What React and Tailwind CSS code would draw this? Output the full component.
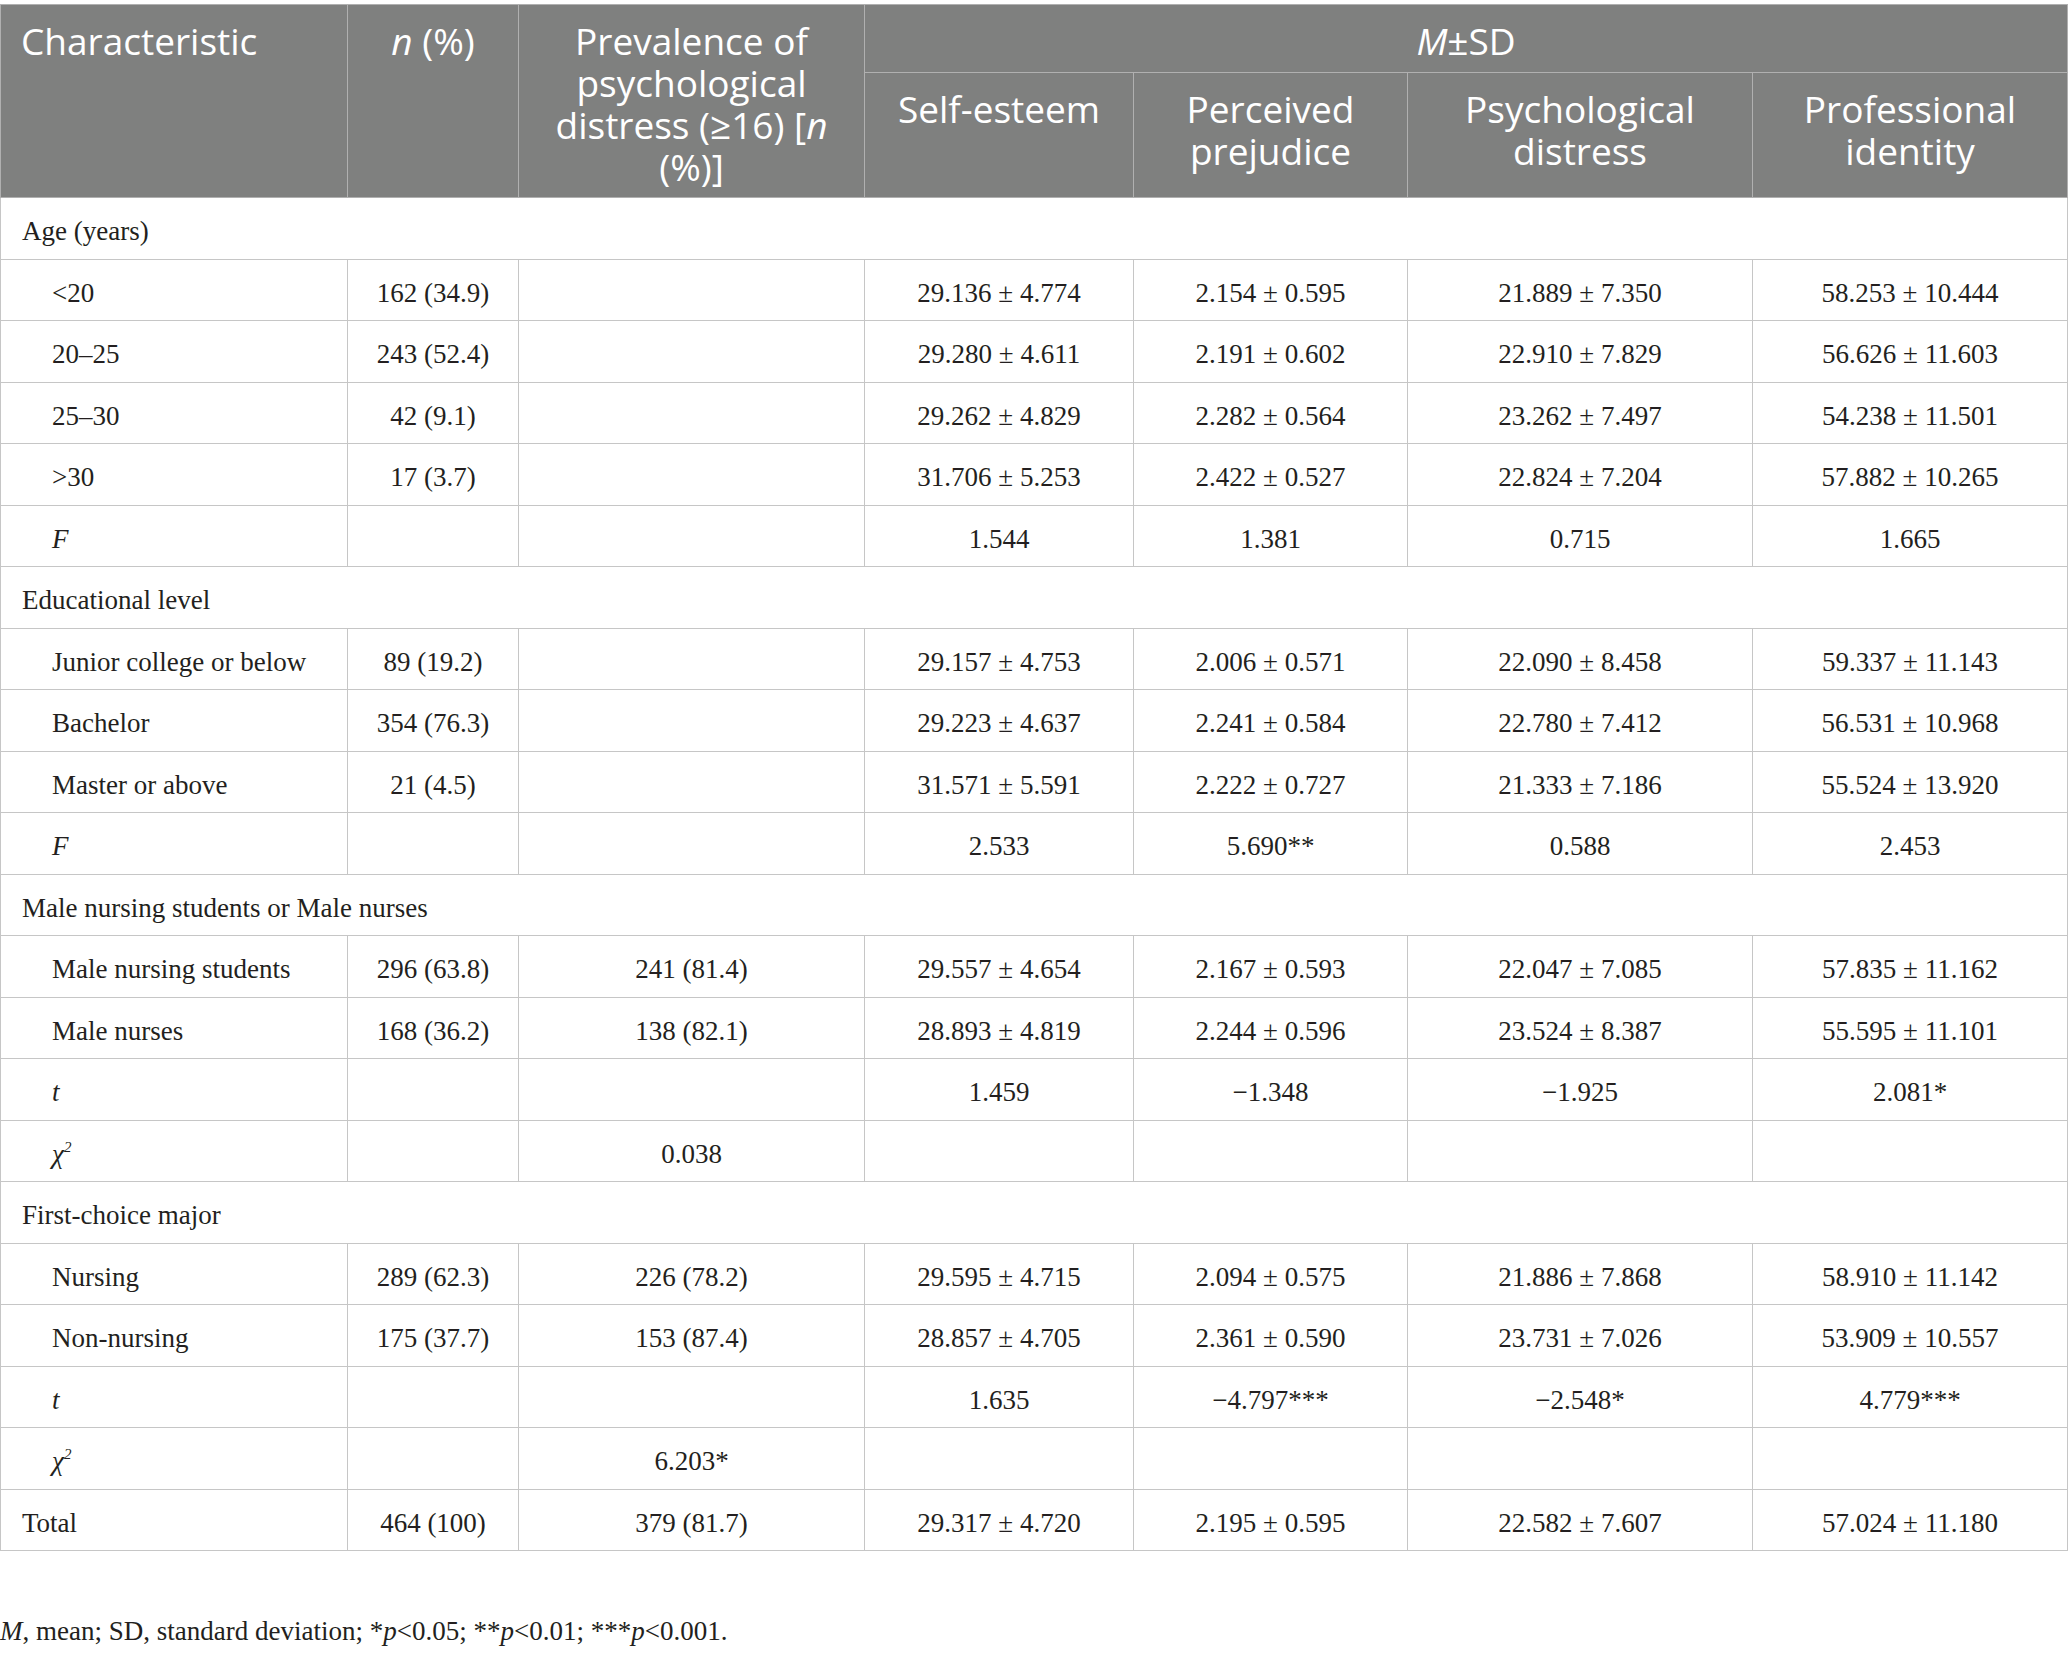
import React from "react";

const sans = { fontFamily: '"Open Sans", "Noto Sans", sans-serif' };
const serif = { fontFamily: '"Liberation Serif", "Times New Roman", serif' };

const rows = [
  { type: "group", label: "Age (years)" },
  { label: "<20", n: "162 (34.9)", p: "", v: ["29.136 ± 4.774", "2.154 ± 0.595", "21.889 ± 7.350", "58.253 ± 10.444"] },
  { label: "20–25", n: "243 (52.4)", p: "", v: ["29.280 ± 4.611", "2.191 ± 0.602", "22.910 ± 7.829", "56.626 ± 11.603"] },
  { label: "25–30", n: "42 (9.1)", p: "", v: ["29.262 ± 4.829", "2.282 ± 0.564", "23.262 ± 7.497", "54.238 ± 11.501"] },
  { label: ">30", n: "17 (3.7)", p: "", v: ["31.706 ± 5.253", "2.422 ± 0.527", "22.824 ± 7.204", "57.882 ± 10.265"] },
  { label: "F", italic: true, n: "", p: "", v: ["1.544", "1.381", "0.715", "1.665"] },
  { type: "group", label: "Educational level" },
  { label: "Junior college or below", n: "89 (19.2)", p: "", v: ["29.157 ± 4.753", "2.006 ± 0.571", "22.090 ± 8.458", "59.337 ± 11.143"] },
  { label: "Bachelor", n: "354 (76.3)", p: "", v: ["29.223 ± 4.637", "2.241 ± 0.584", "22.780 ± 7.412", "56.531 ± 10.968"] },
  { label: "Master or above", n: "21 (4.5)", p: "", v: ["31.571 ± 5.591", "2.222 ± 0.727", "21.333 ± 7.186", "55.524 ± 13.920"] },
  { label: "F", italic: true, n: "", p: "", v: ["2.533", "5.690**", "0.588", "2.453"] },
  { type: "group", label: "Male nursing students or Male nurses" },
  { label: "Male nursing students", n: "296 (63.8)", p: "241 (81.4)", v: ["29.557 ± 4.654", "2.167 ± 0.593", "22.047 ± 7.085", "57.835 ± 11.162"] },
  { label: "Male nurses", n: "168 (36.2)", p: "138 (82.1)", v: ["28.893 ± 4.819", "2.244 ± 0.596", "23.524 ± 8.387", "55.595 ± 11.101"] },
  { label: "t", italic: true, n: "", p: "", v: ["1.459", "−1.348", "−1.925", "2.081*"] },
  { label: "chi", n: "", p: "0.038", v: ["", "", "", ""] },
  { type: "group", label: "First-choice major" },
  { label: "Nursing", n: "289 (62.3)", p: "226 (78.2)", v: ["29.595 ± 4.715", "2.094 ± 0.575", "21.886 ± 7.868", "58.910 ± 11.142"] },
  { label: "Non-nursing", n: "175 (37.7)", p: "153 (87.4)", v: ["28.857 ± 4.705", "2.361 ± 0.590", "23.731 ± 7.026", "53.909 ± 10.557"] },
  { label: "t", italic: true, n: "", p: "", v: ["1.635", "−4.797***", "−2.548*", "4.779***"] },
  { label: "chi", n: "", p: "6.203*", v: ["", "", "", ""] },
  { label: "Total", total: true, n: "464 (100)", p: "379 (81.7)", v: ["29.317 ± 4.720", "2.195 ± 0.595", "22.582 ± 7.607", "57.024 ± 11.180"] },
];

function Label({ r }) {
  if (r.label === "chi") {
    return (
      <span className="italic">
        χ<sup className="text-[15px] align-baseline relative -top-[11px]">2</sup>
      </span>
    );
  }
  return <span className={r.italic ? "italic" : ""}>{r.label}</span>;
}

export default function App() {
  const td = "border border-[#c6c6c6] text-center align-middle pt-[6px]";
  const th = "border border-[#b0b0b0] text-white font-normal align-top text-center pt-[15px]";
  return (
    <div className="w-[2068px] min-h-[1656px] bg-white pt-[4px]">
      <table className="table-fixed border-collapse w-[2067px] text-[#231f20]">
        <colgroup>
          <col className="w-[347px]" />
          <col className="w-[171px]" />
          <col className="w-[346px]" />
          <col className="w-[269px]" />
          <col className="w-[274px]" />
          <col className="w-[345px]" />
          <col className="w-[315px]" />
        </colgroup>
        <thead className="bg-[#7f807f] text-[37px] leading-[42px]" style={sans}>
          <tr className="h-[68px]">
            <th rowSpan={2} className={th + " text-left pl-[20px]"}>Characteristic</th>
            <th rowSpan={2} className={th}>
              <span className="italic">n</span> (%)
            </th>
            <th rowSpan={2} className={th + " px-2"}>
              Prevalence of psychological distress (≥16) [<span className="italic">n</span> (%)]
            </th>
            <th colSpan={4} className={th}>
              <span className="italic">M</span>±SD
            </th>
          </tr>
          <tr className="h-[125px]">
            <th className={th}>Self-esteem</th>
            <th className={th}>Perceived prejudice</th>
            <th className={th}>Psychological distress</th>
            <th className={th}>Professional identity</th>
          </tr>
        </thead>
        <tbody className="text-[27px] leading-[32px]" style={serif}>
          {rows.map((r, i) =>
            r.type === "group" ? (
              <tr key={i} className="h-[61.5px]">
                <td colSpan={7} className="border border-[#c6c6c6] align-middle text-left pl-[21px] pt-[6px]">
                  {r.label}
                </td>
              </tr>
            ) : (
              <tr key={i} className="h-[61.5px]">
                <td className={"border border-[#c6c6c6] align-middle text-left pt-[6px] " + (r.total ? "pl-[21px]" : "pl-[51px]")}>
                  <Label r={r} />
                </td>
                <td className={td}>{r.n}</td>
                <td className={td}>{r.p}</td>
                {r.v.map((x, j) => (
                  <td key={j} className={td}>{x}</td>
                ))}
              </tr>
            )
          )}
        </tbody>
      </table>
      <p className="mt-[64px] text-[27px] leading-[32px] text-[#231f20]" style={serif}>
        <span className="italic">M</span>, mean; SD, standard deviation; *<span className="italic">p</span>&lt;0.05; **
        <span className="italic">p</span>&lt;0.01; ***<span className="italic">p</span>&lt;0.001.
      </p>
    </div>
  );
}
